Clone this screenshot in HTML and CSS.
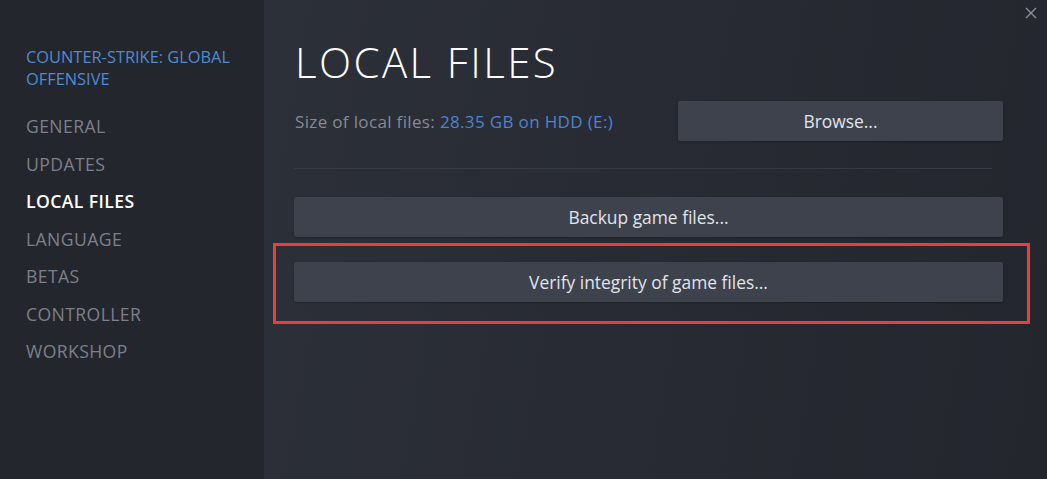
FILE: index.html
```html
<!DOCTYPE html>
<html>
<head>
<meta charset="utf-8">
<link rel="stylesheet" href="styles.css">
</head>
<body>
<div class="window">
  <aside class="sidebar">
    <div class="game-title">COUNTER-STRIKE: GLOBAL OFFENSIVE</div>
    <nav class="nav">
      <div class="nav-item">GENERAL</div>
      <div class="nav-item">UPDATES</div>
      <div class="nav-item active">LOCAL FILES</div>
      <div class="nav-item">LANGUAGE</div>
      <div class="nav-item">BETAS</div>
      <div class="nav-item">CONTROLLER</div>
      <div class="nav-item">WORKSHOP</div>
    </nav>
  </aside>
  <main class="content">
    <h1 class="title">LOCAL FILES</h1>
    <div class="size-row">
      <div class="size-text">Size of local files: <span class="size-value">28.35 GB on HDD (E:)</span></div>
      <button class="btn btn-browse">Browse...</button>
    </div>
    <div class="separator"></div>
    <button class="btn btn-wide">Backup game files...</button>
    <div class="highlight">
      <button class="btn btn-wide">Verify integrity of game files...</button>
    </div>
  </main>
  <div class="close">
    <svg width="12" height="12" viewBox="0 0 12 12"><path d="M1 1 L11 11 M11 1 L1 11" stroke="#8c9099" stroke-width="1.4" fill="none"/></svg>
  </div>
</div>
</body>
</html>
```

FILE: styles.css
```css
html, body {
  margin: 0;
  padding: 0;
  width: 1047px;
  height: 479px;
  overflow: hidden;
  background: #24262d;
  font-family: "Open Sans", "Noto Sans", sans-serif;
}
.window {
  position: relative;
  display: flex;
  width: 1047px;
  height: 479px;
}
.sidebar {
  width: 264px;
  flex: none;
  background: #24262d;
  padding: 46px 0 0 26px;
  box-sizing: border-box;
}
.game-title {
  color: #4f8bd0;
  font-size: 16.4px;
  line-height: 22px;
  width: 225px;
  margin-bottom: 18px;
}
.nav-item {
  color: #7c8089;
  font-size: 17.6px;
  letter-spacing: 0.4px;
  line-height: 37.5px;
  height: 37.5px;
}
.nav-item.active {
  color: #ffffff;
  font-weight: 600;
}
.content {
  flex: 1;
  min-width: 0;
  background: linear-gradient(100deg, #2c3039 0%, #282b33 45%, #23262d 100%);
  padding: 36px 44px 0 30px;
  box-sizing: border-box;
  display: flex;
  flex-direction: column;
}
.title {
  margin: 0;
  font-weight: 300;
  font-size: 42px;
  line-height: 52px;
  letter-spacing: 2.4px;
  color: #ffffff;
  margin-left: 1px;
}
.size-row {
  display: flex;
  align-items: center;
  justify-content: space-between;
  width: 709px;
  margin-top: 13px;
  height: 40px;
}
.size-text {
  color: #868a93;
  font-size: 17px;
  letter-spacing: 0.35px;
  margin-left: 1px;
}
.size-value {
  color: #4f83cc;
}
.btn {
  border: none;
  background: #3d424d;
  color: #e1e4ea;
  font-family: inherit;
  font-size: 17.4px;
  height: 40px;
  border-radius: 2px;
  box-shadow: 0 1px 2px rgba(0,0,0,0.25);
}
.btn-browse {
  width: 325px;
  flex: none;
}
.separator {
  height: 1px;
  width: 698px;
  background: #363a43;
  margin: 27px 0 28px 0;
}
.btn-wide {
  width: 709px;
  flex: none;
}
.highlight {
  margin: 6px 0 0 -21px;
  width: 757px;
  height: 81px;
  border: 3px solid #e5403f;
  box-sizing: border-box;
  padding: 16px 0 0 18px;
}
.close {
  position: absolute;
  top: 7px;
  right: 10px;
  width: 12px;
  height: 12px;
}
.close svg { display: block; }
```
